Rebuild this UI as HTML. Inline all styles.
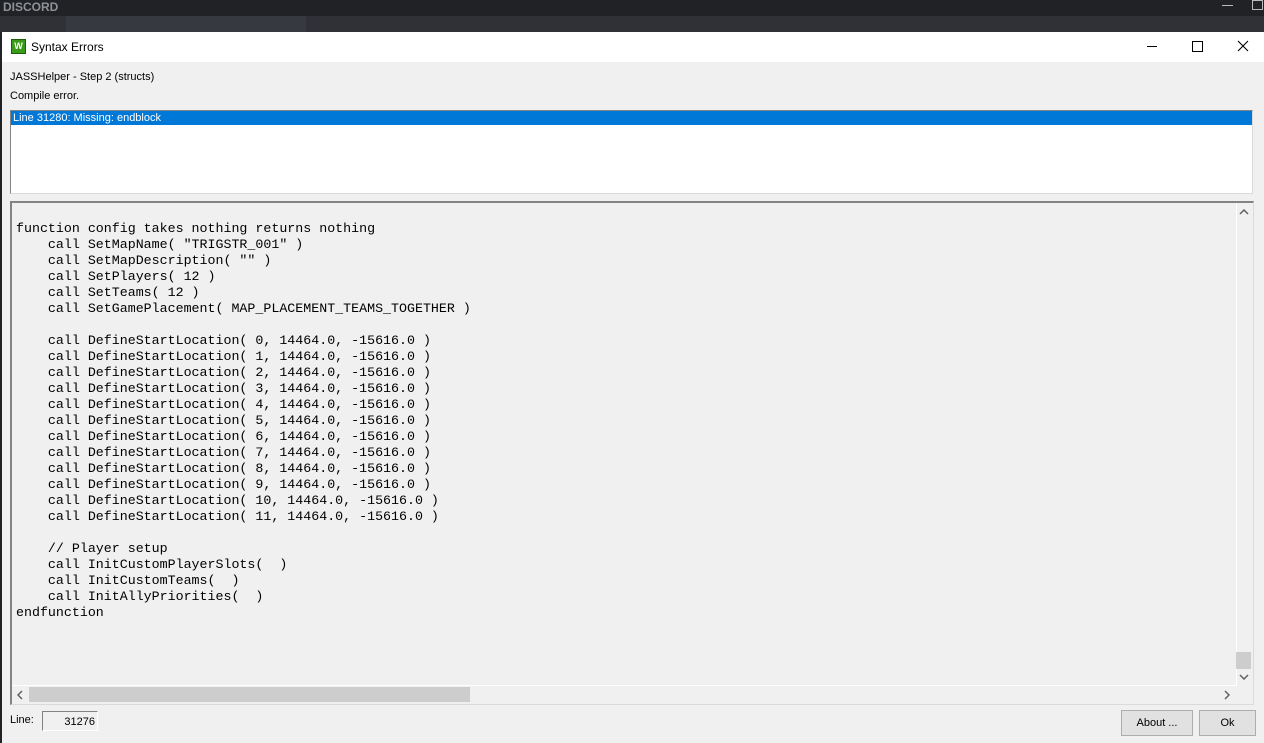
<!DOCTYPE html>
<html><head><style>
body{margin:0;width:1264px;height:743px;background:#202225;position:relative;overflow:hidden;font-family:"Liberation Sans",sans-serif;font-size:12px}
.a{position:absolute}
pre{margin:0;font-family:"Liberation Mono",monospace;font-size:13.3px;line-height:16px;color:#000}
</style></head><body>
<div class="a" style="left:0;top:0;width:1264px;height:16px;background:#202225"></div>
<div class="a" style="left:3px;top:0;color:#8e9297;font-weight:bold;font-size:12px">DISCORD</div>
<div class="a" style="left:1222px;top:5px;width:11px;height:1px;background:#b9bbbe"></div>
<div class="a" style="left:1252px;top:0;width:9px;height:8px;border:1px solid #b9bbbe"></div>
<div class="a" style="left:0;top:16px;width:1264px;height:16px;background:#2f3136"></div>
<div class="a" style="left:66px;top:16px;width:240px;height:16px;background:#36393f"></div>
<div class="a" style="left:2px;top:32px;width:1262px;height:711px;background:#f0f0f0"></div>
<div class="a" style="left:2px;top:32px;width:1262px;height:30px;background:#fff"></div>
<div class="a" style="left:11px;top:39px;width:13px;height:13px;background:#3a9a1a;border:1px solid #1d5e0a;color:#fff;font-size:9px;font-weight:bold;line-height:13px;text-align:center">W</div>
<div class="a" style="left:31px;top:40px;font-size:12px;color:#000">Syntax Errors</div>
<div class="a" style="left:1147px;top:46px;width:10px;height:1px;background:#000"></div>
<div class="a" style="left:1192px;top:41px;width:9px;height:9px;border:1px solid #000"></div>
<svg class="a" style="left:1237px;top:40px" width="12" height="12"><path d="M1 1L11 11M11 1L1 11" stroke="#000" stroke-width="1.1"/></svg>
<div class="a" style="left:10px;top:71px;font-size:11px">JASSHelper - Step 2 (structs)</div>
<div class="a" style="left:10px;top:90px;font-size:11px">Compile error.</div>
<div class="a" style="left:10px;top:110px;width:1241px;height:82px;background:#fff;border:1px solid #dadada;border-top-color:#838383;border-left-color:#838383"></div>
<div class="a" style="left:11px;top:111px;width:1241px;height:14px;background:#0078d7;color:#fff;font-size:11px;line-height:14px;padding-left:2px;box-sizing:border-box">Line 31280: Missing: endblock</div>
<div class="a" style="left:10px;top:201px;width:1241px;height:501px;border:1px solid #dadada;border-top:2px solid #838383;border-left:2px solid #838383;box-sizing:content-box"></div>
<pre class="a" style="left:16px;top:221px">function config takes nothing returns nothing
    call SetMapName( "TRIGSTR_001" )
    call SetMapDescription( "" )
    call SetPlayers( 12 )
    call SetTeams( 12 )
    call SetGamePlacement( MAP_PLACEMENT_TEAMS_TOGETHER )

    call DefineStartLocation( 0, 14464.0, -15616.0 )
    call DefineStartLocation( 1, 14464.0, -15616.0 )
    call DefineStartLocation( 2, 14464.0, -15616.0 )
    call DefineStartLocation( 3, 14464.0, -15616.0 )
    call DefineStartLocation( 4, 14464.0, -15616.0 )
    call DefineStartLocation( 5, 14464.0, -15616.0 )
    call DefineStartLocation( 6, 14464.0, -15616.0 )
    call DefineStartLocation( 7, 14464.0, -15616.0 )
    call DefineStartLocation( 8, 14464.0, -15616.0 )
    call DefineStartLocation( 9, 14464.0, -15616.0 )
    call DefineStartLocation( 10, 14464.0, -15616.0 )
    call DefineStartLocation( 11, 14464.0, -15616.0 )

    // Player setup
    call InitCustomPlayerSlots(  )
    call InitCustomTeams(  )
    call InitAllyPriorities(  )
endfunction</pre>
<div class="a" style="left:1236px;top:203px;width:1px;height:483px;background:#fff"></div>
<div class="a" style="left:1236px;top:652px;width:15px;height:17px;background:#cdcdcd"></div>
<svg class="a" style="left:1239px;top:209px" width="10" height="6"><path d="M1 5L5 1L9 5" stroke="#606060" stroke-width="1.5" fill="none"/></svg>
<svg class="a" style="left:1239px;top:674px" width="10" height="6"><path d="M1 1L5 5L9 1" stroke="#606060" stroke-width="1.5" fill="none"/></svg>
<div class="a" style="left:12px;top:685px;width:1224px;height:1px;background:#fff"></div>
<div class="a" style="left:29px;top:687px;width:441px;height:15px;background:#cdcdcd"></div>
<svg class="a" style="left:17px;top:690px" width="6" height="10"><path d="M5 1L1 5L5 9" stroke="#606060" stroke-width="1.5" fill="none"/></svg>
<svg class="a" style="left:1224px;top:690px" width="6" height="10"><path d="M1 1L5 5L1 9" stroke="#606060" stroke-width="1.5" fill="none"/></svg>
<div class="a" style="left:10px;top:714px;font-size:11px">Line:</div>
<div class="a" style="left:42px;top:711px;width:56px;height:20px;border:1px solid #fff;border-top-color:#838383;border-left-color:#838383;font-size:11px;text-align:right;line-height:20px;padding-right:2px;box-sizing:border-box">31276</div>
<div class="a" style="left:1121px;top:710px;width:72px;height:26px;background:#e1e1e1;border:1px solid #adadad;box-sizing:border-box;font-size:11px;text-align:center;line-height:25px">About ...</div>
<div class="a" style="left:1199px;top:710px;width:57px;height:26px;background:#e1e1e1;border:1px solid #adadad;box-sizing:border-box;font-size:11px;text-align:center;line-height:25px">Ok</div>
</body></html>
